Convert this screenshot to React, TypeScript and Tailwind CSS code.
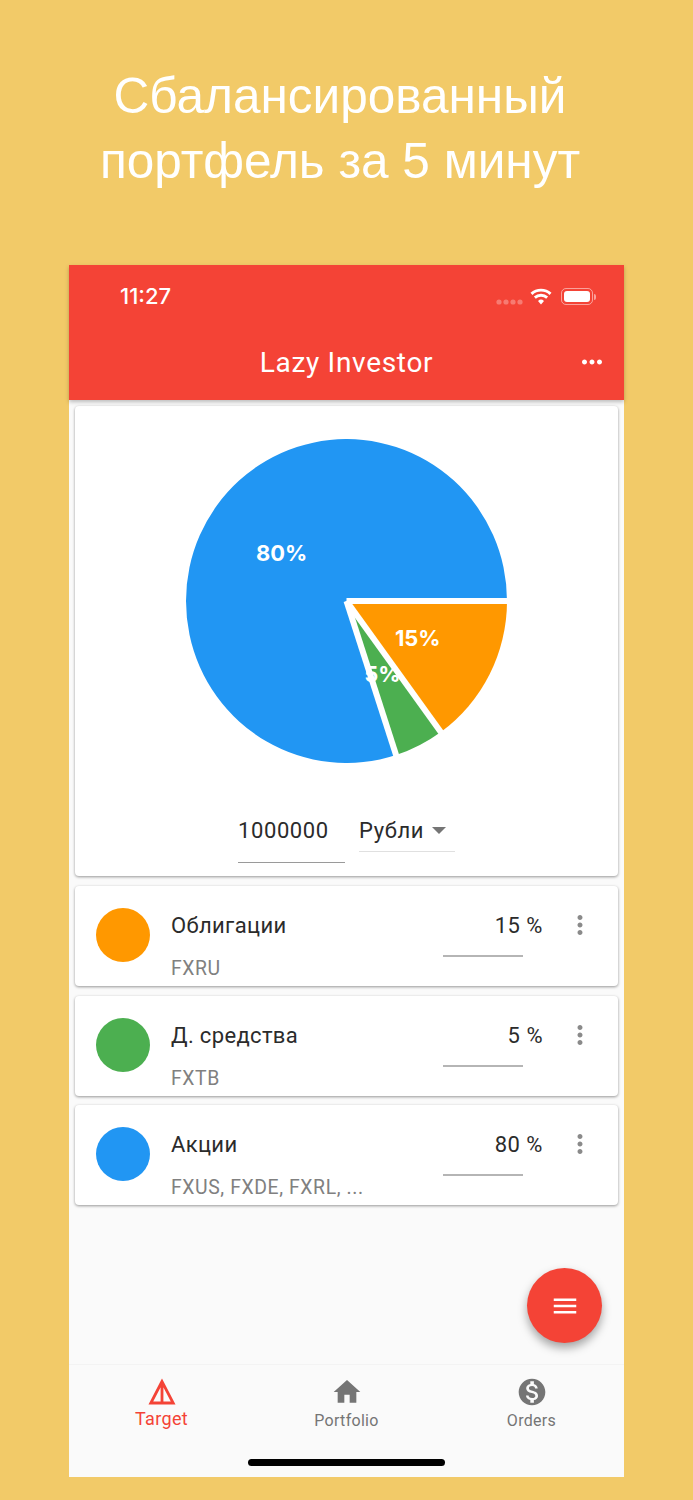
import { MdHome, MdMenu, MdMonetizationOn, MdMoreHoriz, MdMoreVert } from 'react-icons/md';

const CX = 161;
const CY = 161;
const R = 161;

const point = (deg: number, r = R) => {
  const a = (deg * Math.PI) / 180;
  return [CX + r * Math.cos(a), CY + r * Math.sin(a)];
};

const sector = (from: number, to: number) => {
  const [x1, y1] = point(from);
  const [x2, y2] = point(to);
  const large = to - from > 180 ? 1 : 0;
  return `M${CX} ${CY} L${x1} ${y1} A${R} ${R} 0 ${large} 1 ${x2} ${y2} Z`;
};

const slices = [
  { from: 0, to: 54, fill: '#ff9800' },
  { from: 54, to: 72, fill: '#4caf50' },
  { from: 72, to: 360, fill: '#2196f3' },
];

const rows = [
  { title: 'Облигации', sub: 'FXRU', pct: '15 %', color: 'bg-[#ff9800]' },
  { title: 'Д. средства', sub: 'FXTB', pct: '5 %', color: 'bg-[#4caf50]' },
  { title: 'Акции', sub: 'FXUS, FXDE, FXRL, ...', pct: '80 %', color: 'bg-[#2196f3]' },
];

function Pie() {
  return (
    <svg width="321" height="324" viewBox="0 0 322 322" preserveAspectRatio="none" className="block">
      {slices.map((s) => (
        <path key={s.fill} d={sector(s.from, s.to)} fill={s.fill} />
      ))}
      {[0, 54, 72].map((deg) => {
        const [x, y] = point(deg, R + 2);
        return <line key={deg} x1={CX} y1={CY} x2={x} y2={y} stroke="#fff" strokeWidth="6" />;
      })}
      <g fill="#fff" fontFamily="Inter, sans-serif" fontWeight="700" fontSize="22" textAnchor="middle">
        <text x="96" y="121">80%</text>
        <text x="232.5" y="206">15%</text>
        <text x="197" y="242">5%</text>
      </g>
    </svg>
  );
}

function StatusIcons() {
  return (
    <div className="flex items-center mt-[5px] -ml-[1px]">
      <svg width="28" height="6" viewBox="0 0 28 6" className="mt-[10px] mr-[6px]">
        {[3, 10, 17, 24].map((x) => (
          <circle key={x} cx={x} cy="3" r="2.6" fill="#fff" opacity="0.3" />
        ))}
      </svg>
      <svg width="22" height="17" viewBox="0 0 22 17" className="mr-[9px]">
        <path d="M11 16.5 8 13a4.4 4.4 0 0 1 6 0zM5.8 10.7 3.9 8.5a10.6 10.6 0 0 1 14.2 0l-1.9 2.2a7.6 7.6 0 0 0-10.4 0zM2.5 6.9.5 4.7a15.6 15.6 0 0 1 21 0l-2 2.2a12.6 12.6 0 0 0-17 0z" fill="#fff" />
      </svg>
      <div className="w-[32px] h-[17px] rounded-[5px] border border-white/50 p-[2px]">
        <div className="w-full h-full rounded-[3px] bg-white" />
      </div>
      <div className="w-[2px] h-[6px] rounded-r-full bg-white/50 ml-[1px]" />
    </div>
  );
}

function TargetIcon() {
  return (
    <svg width="28" height="28" viewBox="0 0 28 28" fill="none" stroke="#f44336" strokeWidth="2.8">
      <path d="M14 3.5 2.8 25h22.4zM14 4v21" />
    </svg>
  );
}

function NavItem({ label, active, icon }: { label: string; active?: boolean; icon: React.ReactNode }) {
  return (
    <div className={`flex-1 flex flex-col items-center pt-[12px] ${active ? 'text-[#f44336]' : 'text-[#757575]'}`}>
      <div className="h-[30px] flex items-center justify-center">{icon}</div>
      <span className={`leading-[20px] ${active ? 'text-[18px] mt-[2px] tracking-[0.35px]' : 'text-[16px] mt-[4px] tracking-[0.3px]'}`}>{label}</span>
    </div>
  );
}

export default function App() {
  return (
    <div className="w-[693px] h-[1500px] bg-[#f2ca68] flex flex-col items-center font-['Roboto',sans-serif] antialiased">
      <h1 className="w-full h-[265px] pt-[63px] pr-[13px] text-center text-white text-[49.5px] leading-[65px] font-['Liberation_Sans',sans-serif]">
        Сбалансированный
        <br />
        портфель за 5 минут
      </h1>

      <div className="relative w-[555px] h-[1212px] bg-[#fafafa] flex flex-col">
        <header className="h-[135px] bg-[#f44336] text-white shrink-0 shadow-[0_2px_4px_rgba(0,0,0,0.25)] z-10">
          <div className="h-[60px] pt-[18px] pl-[51px] pr-[28px] flex items-start justify-between">
            <span className="text-[22px] leading-[26px] font-medium font-['Inter',sans-serif]">11:27</span>
            <StatusIcons />
          </div>
          <div className="relative h-[75px] flex items-center justify-center pt-[1px]">
            <span className="text-[28px] tracking-[0.7px]">Lazy Investor</span>
            <MdMoreHoriz className="absolute right-[17px] top-[22px] text-[30px]" />
          </div>
        </header>

        <main className="flex-1 px-[6px] pt-[6px] flex flex-col gap-[10px]">
          <section className="h-[470px] bg-white rounded-[4px] shadow-[0_1px_3px_rgba(0,0,0,0.4)] flex flex-col items-center pt-[33px]">
            <Pie />
            <div className="mt-[37px] flex items-start text-[#2b2b2b] text-[22px] tracking-[0.6px] w-[217px]">
              <div className="w-[107px] h-[64px] border-b-[1.5px] border-[#9a9a9a] leading-[64px] -mt-[1px]">1000000</div>
              <div className="ml-[14px] w-[96px] h-[53px] border-b border-[#e0e0e0] flex items-start justify-between pr-[9px] -mt-[1px] leading-[64px]">
                <span>Рубли</span>
                <span className="w-0 h-0 border-x-[7px] border-x-transparent border-t-[7px] border-t-[#757575] mt-[28px]" />
              </div>
            </div>
          </section>

          {rows.map((row) => (
            <section key={row.title} className="h-[100px] -mb-[0.3px] bg-white rounded-[4px] shadow-[0_1px_3px_rgba(0,0,0,0.4)] flex pl-[21px] pr-[26px]">
              <div className={`w-[54px] h-[54px] rounded-full mt-[22px] shrink-0 ${row.color}`} />
              <div className="ml-[21px] flex-1 pt-[25px]">
                <div className="text-[22px] leading-[30px] tracking-[0.35px] text-[#2b2b2b]">{row.title}</div>
                <div className="mt-[17px] text-[19.4px] leading-[22px] tracking-[0.6px] text-[#808080]">{row.sub}</div>
              </div>
              <div className="w-[80px] h-[71px] border-b-[2px] border-[#b5b5b5] pt-[25px] relative">
                <span className="absolute right-[-20px] text-[22px] leading-[30px] tracking-[0.5px] text-[#2b2b2b]">{row.pct}</span>
              </div>
              <MdMoreVert className="mt-[24px] ml-[42px] text-[30px] text-[#8a8a8a] shrink-0 -mr-[3px]" />
            </section>
          ))}
        </main>

        <button className="absolute right-[22px] top-[1003px] w-[75px] h-[75px] rounded-full bg-[#f44336] flex items-center justify-center text-white shadow-[0_5px_10px_rgba(0,0,0,0.35)]">
          <MdMenu className="text-[30px]" />
        </button>

        <nav className="h-[113px] shrink-0 border-t border-[#f3f3f3] flex relative">
          <NavItem label="Target" active icon={<TargetIcon />} />
          <NavItem label="Portfolio" icon={<MdHome className="text-[32px]" />} />
          <NavItem label="Orders" icon={<MdMonetizationOn className="text-[32px]" />} />
          <div className="absolute left-[179px] bottom-[11px] w-[197px] h-[7px] rounded-full bg-black" />
        </nav>
      </div>
    </div>
  );
}
